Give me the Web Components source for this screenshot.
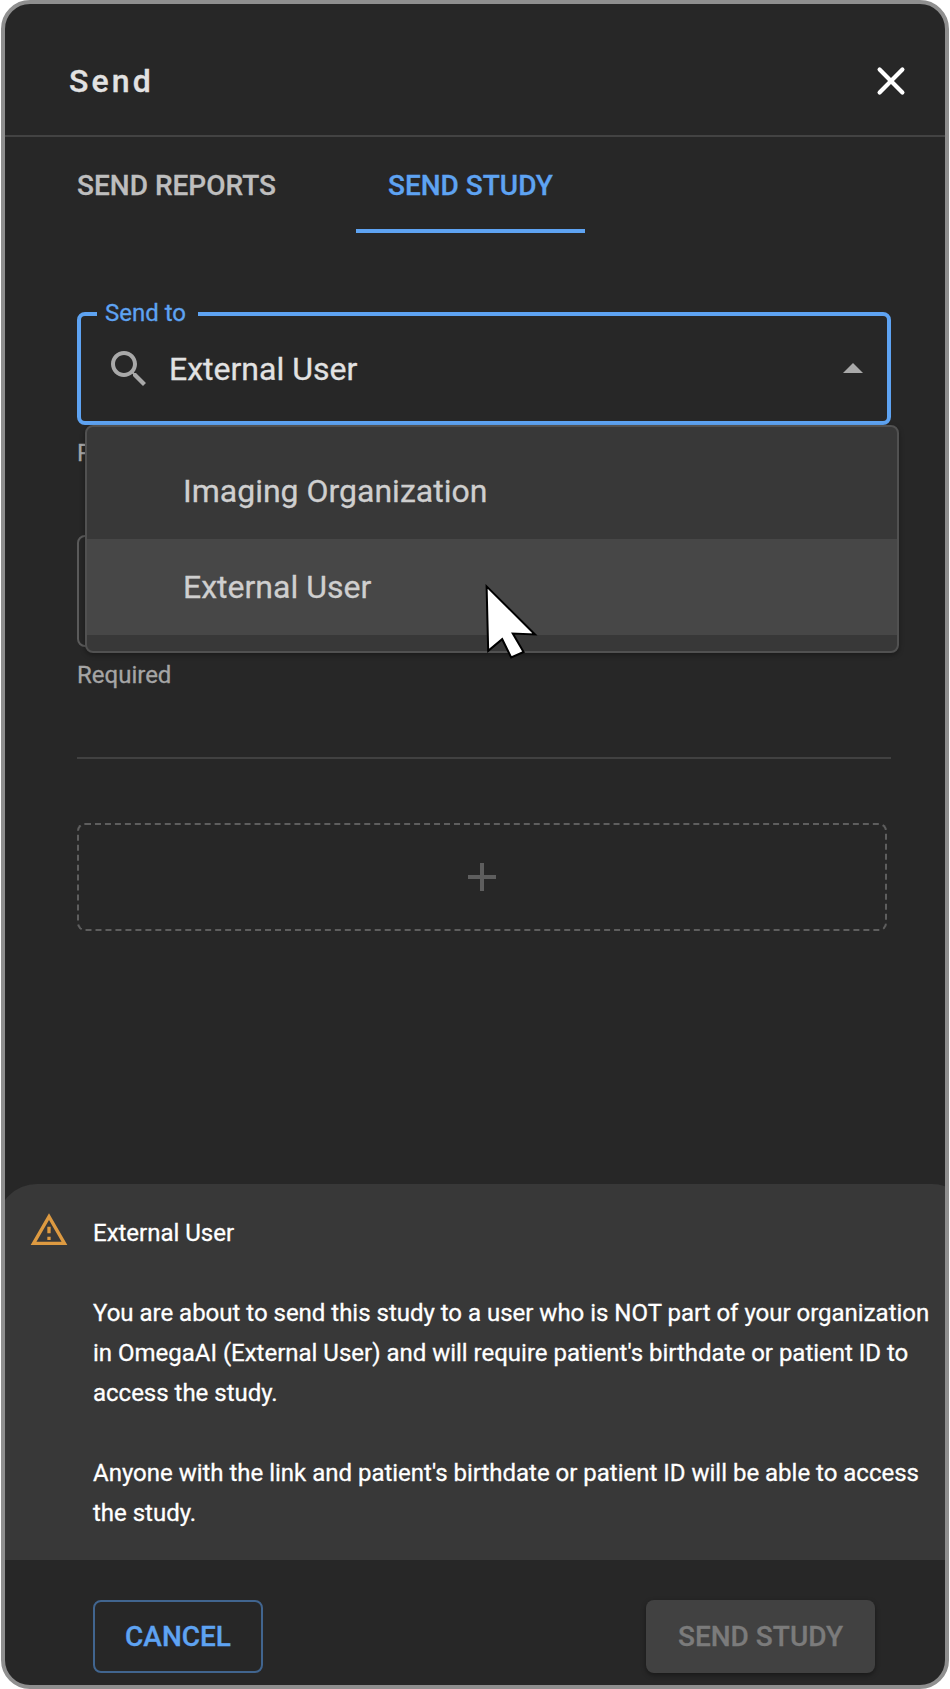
<!DOCTYPE html>
<html lang="en">
<head>
<meta charset="utf-8">
<title>Send</title>
<style>
html,body{margin:0;background:#fff}
body{font-family:Roboto,"Liberation Sans",sans-serif;height:1689px;overflow:hidden;-webkit-text-stroke:.3px currentColor}
</style>
</head>
<body>
<send-dialog>
  <dialog-header slot="header">Send</dialog-header>
  <tab-bar slot="tabs">
    <tab-item>SEND REPORTS</tab-item>
    <tab-item active>SEND STUDY</tab-item>
  </tab-bar>
  <select-field label="Send to" helper="Required">
    External User
    <option-menu slot="menu">
      <option-item>Imaging Organization</option-item>
      <option-item hovered>External User</option-item>
      <mouse-pointer slot="pointer"></mouse-pointer>
    </option-menu>
  </select-field>
  <outlined-field helper="Required"></outlined-field>
  <section-rule></section-rule>
  <add-box></add-box>
  <warning-panel slot="notice">
    <span slot="title">External User</span>
    <notice-text>You are about to send this study to a user who is NOT part of your organization<br>in OmegaAI (External User) and will require patient's birthdate or patient ID to<br>access the study.</notice-text>
    <notice-text>Anyone with the link and patient's birthdate or patient ID will be able to access<br>the study.</notice-text>
  </warning-panel>
  <action-button slot="actions" kind="outlined">CANCEL</action-button>
  <action-button slot="actions" kind="disabled">SEND STUDY</action-button>
</send-dialog>
<script>
const define = (name, markup, setup) => customElements.define(name, class extends HTMLElement {
  constructor() {
    super();
    const t = document.createElement('template');
    t.innerHTML = markup;
    this.attachShadow({ mode: 'open' }).append(t.content.cloneNode(true));
  }
  connectedCallback() { if (setup) setup(this, this.shadowRoot); }
});

define('send-dialog', `<style>
:host{display:flex;flex-direction:column;box-sizing:border-box;width:948px;height:1689px;margin-left:1px;border:4px solid #8f8f8f;border-radius:29px;background:#272727;overflow:hidden}
main{flex:1;padding:79px 54px 0 72px}
footer{display:flex;justify-content:space-between;align-items:flex-start;box-sizing:border-box;height:125px;padding:40px 70px 0 88px}
</style><slot name="header"></slot><slot name="tabs"></slot><main><slot></slot></main><slot name="notice"></slot><footer><slot name="actions"></slot></footer>`);

define('dialog-header', `<style>
:host{display:flex;align-items:center;justify-content:space-between;height:131px;padding:0 34px 0 64px;border-bottom:2px solid #434343;flex:none}
h1{margin:23px 0 0;font-size:32px;line-height:40px;font-weight:500;letter-spacing:3.1px;color:#e2e2e2}
svg{width:40px;height:40px;margin-top:22px}
</style><h1><slot></slot></h1>
<svg viewBox="0 0 40 40" fill="none" stroke="#fff" stroke-width="4.2" stroke-linecap="round"><path d="M8.6 8.6 31.4 31.4M31.4 8.6 8.6 31.4"/></svg>`);

define('tab-bar', `<style>:host{display:flex;gap:48px;padding-left:40px;height:96px;flex:none}</style><slot></slot>`);
define('tab-item', `<style>
:host{display:block;box-sizing:border-box;padding:29px 32px 0;font-size:28px;line-height:40px;font-weight:500;color:#bebebe;white-space:nowrap}
:host([active]){color:#5ea3f2;border-bottom:4px solid #5ea3f2}
</style><slot></slot>`);

define('select-field', `<style>
:host{display:block;position:relative;height:223px}
.box{box-sizing:border-box;display:flex;align-items:center;height:113px;border:4px solid #5ea3f2;border-radius:8px;padding:0 10px 0 24px;color:#e2e2e2;font-size:32px;line-height:40px}
.label{position:absolute;left:20px;top:-13px;width:93px;height:28px;padding-left:8px;background:#272727;color:#5ea3f2;font-size:24px;line-height:28px;white-space:nowrap}
.value{flex:1;margin:1px 0 0 16px}
svg{width:48px;height:48px;fill:#a9a9a9;flex:none}
.helper{font-size:24px;line-height:40px;margin-top:8px;color:#a5a5a5}
::slotted(option-menu){position:absolute;left:8px;top:113px;z-index:2}
</style>
<div class="box"><svg viewBox="0 0 24 24"><path d="M15.5 14h-.79l-.28-.27C15.41 12.59 16 11.11 16 9.5 16 5.91 13.09 3 9.5 3S3 5.91 3 9.5 5.91 16 9.5 16c1.61 0 3.09-.59 4.23-1.57l.27.28v.79l5 4.99L20.49 19l-4.99-5zm-6 0C7.01 14 5 11.99 5 9.5S7.01 5 9.5 5 14 7.01 14 9.5 11.99 14 9.5 14z"/></svg><span class="value"><slot></slot></span><svg viewBox="0 0 24 24"><path d="M7 14l5-5 5 5z"/></svg></div>
<div class="label"></div><div class="helper"></div><slot name="menu"></slot>`, (el, r) => {
  r.querySelector('.label').textContent = el.getAttribute('label');
  r.querySelector('.helper').textContent = el.getAttribute('helper');
});

define('option-menu', `<style>
:host{display:block;box-sizing:border-box;width:814px;height:228px;border:2px solid #515151;border-radius:8px;background:#383838;padding:16px 0;box-shadow:0 2px 5px rgba(0,0,0,.35)}
::slotted(mouse-pointer){position:absolute;left:393px;top:152.5px}
</style><slot></slot><slot name="pointer"></slot>`);
define('option-item', `<style>
:host{display:flex;align-items:center;height:96px;padding-left:96px;font-size:32px;color:#cfcfcf}
:host([hovered]){background:#474747}
</style><slot></slot>`);
define('mouse-pointer', `<style>:host{display:block;width:60px;height:80px}svg{display:block}</style>
<svg width="60" height="80" viewBox="0 0 60 80"><path d="M6.6 6.4 55 54.5 32.8 53.6 43.6 72 31.2 77.4 22.2 59.2 8.2 70.8Z" fill="#fff" stroke="#000" stroke-width="2"/></svg>`);

define('outlined-field', `<style>
:host{display:block;height:222px}
.box{box-sizing:border-box;height:112px;border:2px solid #5a5a5a;border-radius:8px}
.helper{font-size:24px;line-height:40px;margin-top:8px;color:#a5a5a5}
</style><div class="box"></div><div class="helper"></div>`, (el, r) => {
  r.querySelector('.helper').textContent = el.getAttribute('helper');
});
define('section-rule', `<style>:host{display:block;height:2px;background:#414141}</style>`);
define('add-box', `<style>
:host{display:flex;align-items:center;justify-content:center;box-sizing:border-box;height:108px;margin:64px 4px 0 0;border:2px dashed #5e5e5e;border-radius:8px}
svg{width:28px;height:28px}
</style><svg viewBox="0 0 28 28" fill="#5e5e5e"><path d="M12 0h4v12h12v4H16v12h-4V16H0v-4h12z"/></svg>`);

define('warning-panel', `<style>
:host{display:flex;align-items:flex-start;box-sizing:border-box;flex:none;height:376px;margin:0 -27px 0 -8px;padding:29px 0 0 32px;border-radius:40px 40px 0 0;background:#383838;color:#fff;font-size:24px;line-height:40px}
svg{width:40px;height:40px;flex:none;margin-top:-3px}
.body{display:flex;flex-direction:column;gap:40px;margin-left:24px;white-space:nowrap;letter-spacing:-.01px}
</style><svg viewBox="0 0 24 24" fill="#dd9a41"><path d="M12 5.99 19.53 19H4.47L12 5.99M12 2 1 21h22L12 2zm1 14h-2v2h2v-2zm0-6h-2v4h2v-4z"/></svg>
<div class="body"><slot name="title"></slot><slot></slot></div>`);
define('notice-text', `<style>:host{display:block}</style><slot></slot>`);

define('action-button', `<style>
:host{display:flex;align-items:center;justify-content:center;box-sizing:border-box;height:73px;border-radius:8px;font-size:28px;font-weight:500;white-space:nowrap}
:host([kind=outlined]){width:170px;border:2px solid #41658f;color:#5ea3f2}
:host([kind=disabled]){width:229px;background:#414141;color:#7b7b7b;box-shadow:0 2px 5px rgba(0,0,0,.4)}
</style><slot></slot>`);
</script>
</body>
</html>
